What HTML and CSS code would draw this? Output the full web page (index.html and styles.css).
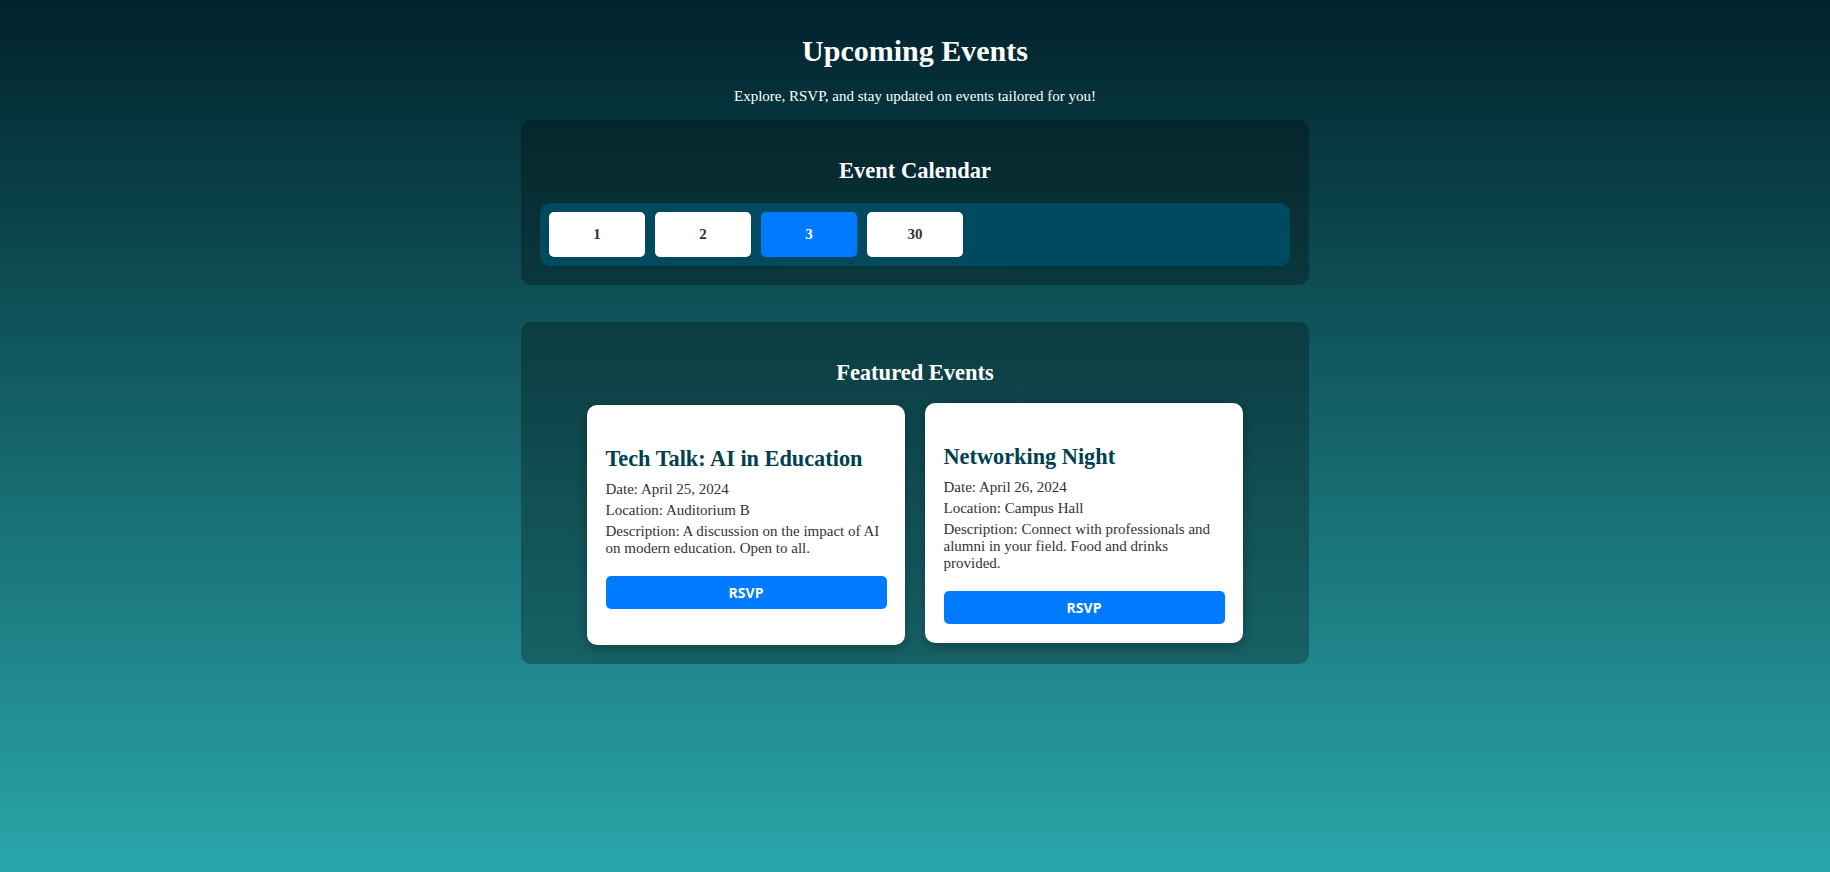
FILE: index.html
```html
<!DOCTYPE html>
<html lang="en">
<head>
<meta charset="utf-8">
<title>Upcoming Events</title>
<link rel="stylesheet" href="styles.css">
</head>
<body>
<div class="page">
  <header class="hero">
    <h1 class="hero-title">Upcoming Events</h1>
    <p class="hero-sub">Explore, RSVP, and stay updated on events tailored for you!</p>
  </header>

  <section class="panel">
    <h2 class="panel-title">Event Calendar</h2>
    <div class="calendar">
      <button class="day">1</button>
      <button class="day">2</button>
      <button class="day day-active">3</button>
      <button class="day">30</button>
    </div>
  </section>

  <section class="panel panel-featured">
    <h2 class="panel-title">Featured Events</h2>
    <div class="cards">
      <article class="card">
        <h3 class="card-title">Tech Talk: AI in Education</h3>
        <p class="card-text">Date: April 25, 2024</p>
        <p class="card-text">Location: Auditorium B</p>
        <p class="card-text">Description: A discussion on the impact of AI on modern education. Open to all.</p>
        <button class="rsvp">RSVP</button>
      </article>
      <article class="card card-raised">
        <h3 class="card-title">Networking Night</h3>
        <p class="card-text">Date: April 26, 2024</p>
        <p class="card-text">Location: Campus Hall</p>
        <p class="card-text">Description: Connect with professionals and alumni in your field. Food and drinks provided.</p>
        <button class="rsvp">RSVP</button>
      </article>
    </div>
  </section>
</div>
</body>
</html>
```

FILE: styles.css
```css
html, body {
  margin: 0;
  padding: 0;
}

.page {
  min-height: 100vh;
  box-sizing: border-box;
  padding-top: 14.2px;
  background: linear-gradient(to bottom, #01222b 0%, #29a6aa 100%);
  font-family: "Liberation Serif", "Times New Roman", serif;
  font-size: 15px;
  color: #ffffff;
}

.hero {
  text-align: center;
}

.hero-title {
  font-size: 30px;
  font-weight: bold;
  line-height: normal;
  margin: 20.1px 0;
}

.hero-sub {
  margin: 15px 0;
  line-height: normal;
}

.panel {
  width: 750px;
  margin: 0 auto;
  padding: 18.75px;
  border-radius: 10px;
  background: rgba(0, 0, 0, 0.27);
}

.panel-featured {
  margin-top: 37.5px;
}

.panel-title {
  font-size: 22.5px;
  font-weight: bold;
  line-height: normal;
  text-align: center;
  margin: 18.7px 0;
}

.calendar {
  display: grid;
  grid-template-columns: repeat(7, 1fr);
  gap: 10px;
  padding: 9px;
  background: #004a5f;
  border-radius: 10px;
}

.day {
  height: 45.7px;
  border: none;
  border-radius: 5px;
  background: #ffffff;
  color: #333333;
  font-family: "Liberation Serif", "Times New Roman", serif;
  font-size: 15px;
  font-weight: bold;
  padding: 0;
}

.day-active {
  background: #007bff;
  color: #ffffff;
}

.cards {
  display: flex;
  justify-content: center;
  align-items: stretch;
  gap: 19.5px;
}

.card {
  width: 281px;
  padding: 18.75px;
  background: #ffffff;
  border-radius: 10px;
  box-shadow: 0 4px 12px rgba(0, 0, 0, 0.3);
  color: #333333;
}

.card-raised {
  transform: translateY(-2px);
}

.card-title {
  font-size: 22.3px;
  font-weight: bold;
  line-height: normal;
  color: #00404f;
  margin: 22.5px 0 9px;
}

.card-text {
  margin: 4px 0;
  line-height: normal;
}

.rsvp {
  display: block;
  width: 100%;
  margin-top: 19.4px;
  padding: 7px 0;
  border: none;
  border-radius: 5px;
  background: #007bff;
  color: #ffffff;
  font-family: "Open Sans", "Liberation Sans", sans-serif;
  font-size: 14px;
  font-weight: bold;
  line-height: 19px;
}
```
